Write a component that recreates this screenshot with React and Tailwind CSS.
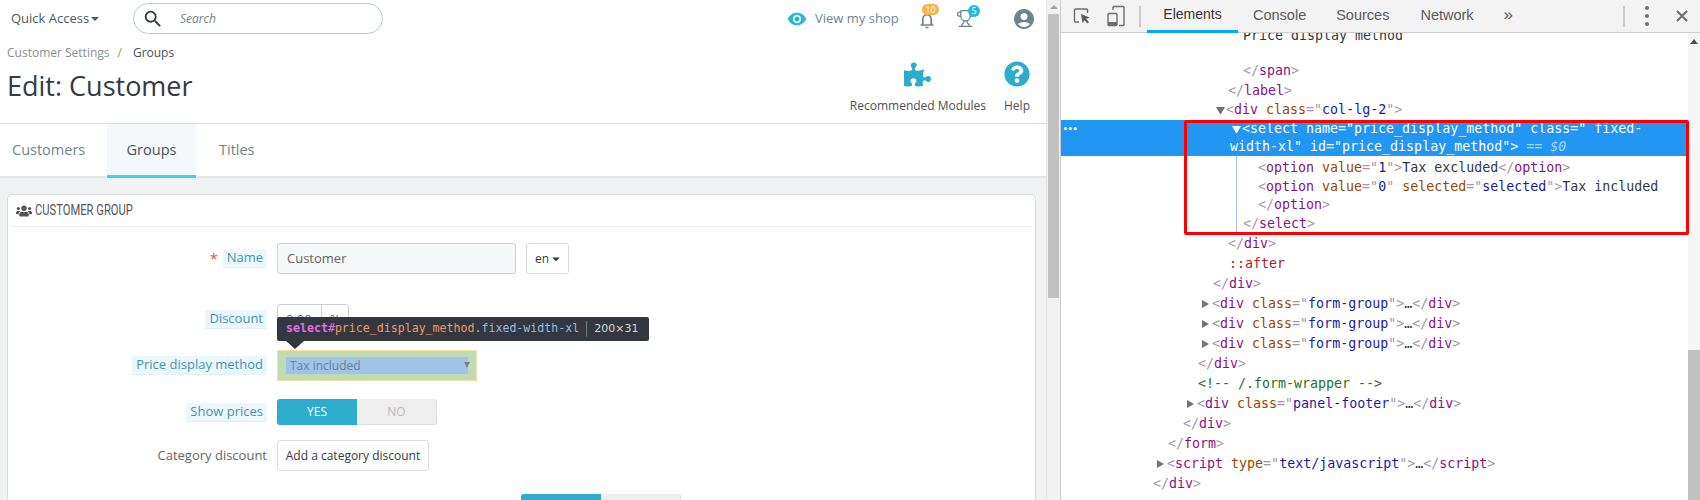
import { FaUsers, FaPuzzlePiece, FaQuestionCircle } from 'react-icons/fa';
import { MdVisibility, MdAccountCircle, MdNotificationsNone, MdSearch, MdArrowDropDown } from 'react-icons/md';
import { Trophy } from 'lucide-react';

const B = ({ children }) => <span className="text-[#a894a6]">{children}</span>;
const T = ({ children }) => <span className="text-[#881280]">{children}</span>;
const A = ({ children }) => <span className="text-[#994500]">{children}</span>;
const V = ({ children }) => <span className="text-[#1a1aa6]">{children}</span>;
const X = ({ children }) => <span className="text-[#303942]">{children}</span>;

const Open = ({ tag, attr, val }) => (
  <>
    <B>&lt;</B><T>{tag}</T>{' '}<A>{attr}</A><B>="</B><V>{val}</V><B>"&gt;</B>
  </>
);
const Close = ({ tag }) => (
  <>
    <B>&lt;/</B><T>{tag}</T><B>&gt;</B>
  </>
);

const Row = ({ left, arrow, children, h = 'h-5' }) => (
  <div className={`flex items-center whitespace-pre ${h}`}>
    <div className="shrink-0" style={{ width: left - 1061 }} />
    {arrow === 'down' ? <span className="-ml-[10px] mr-[1px] w-[9px] h-0 border-x-[4.5px] border-x-transparent border-t-[7px] border-t-[#727272]" /> : null}
    {arrow === 'right' ? <span className="-ml-[10px] mr-[3px] w-[7px] h-0 border-y-[4.5px] border-y-transparent border-l-[7px] border-l-[#727272]" /> : null}
    <span>{children}</span>
  </div>
);

const Collapsed = ({ left, tag, attr, val }) => (
  <Row left={left} arrow="right">
    <Open tag={tag} attr={attr} val={val} /><X>…</X><Close tag={tag} />
  </Row>
);

const Label = ({ children }) => (
  <span className="rounded-[2px] bg-[#edf7fb] px-1 h-[19px] flex items-center text-[#3f93b8] border-b border-[#e0f0f6]">{children}</span>
);

const FormRow = ({ label, className, children }) => (
  <div className={`flex items-center ${className}`}>
    <div className="w-[255px] shrink-0 flex justify-end items-center">{label}</div>
    <div className="ml-[10px] flex items-center">{children}</div>
  </div>
);

const Toggle = ({ yes, no }) => (
  <div className="flex w-[160px] h-[26px] text-[12px]">
    <div className="w-[80px] flex items-center justify-center rounded-l-[3px] bg-[#2eacce] text-white">{yes}</div>
    <div className="w-[80px] flex items-center justify-center rounded-r-[3px] bg-[#eeeeee] text-[#bbbbbb] border-r border-b border-[#dddddd]">{no}</div>
  </div>
);

const App = () => {
  return (
    <div className="flex w-[1700px] h-[500px] overflow-hidden bg-white font-['Open_Sans',sans-serif] text-[13px] text-[#363a41]">
      {/* page */}
      <div className="w-[1046px] shrink-0 flex flex-col">
        <div className="h-[37px] flex items-center shrink-0 whitespace-nowrap">
          <span className="ml-[11px] w-[76px] text-[13px] text-[#4d5a62]">Quick Access</span>
          <span className="ml-[4px] w-0 h-0 border-x-[4px] border-x-transparent border-t-[4px] border-t-[#4d5a62]" />
          <div className="ml-[34px] w-[250px] h-[31px] rounded-full border border-[#bbcdd2] flex items-center">
            <MdSearch className="ml-[8px] text-[#363a41]" size={22} />
            <span className="ml-[16px] italic text-[12px] text-[#6c868e]">Search</span>
          </div>
          <MdVisibility className="ml-[404px] text-[#25b9d7]" size={20} />
          <span className="ml-[8px] w-[83px] text-[13px] text-[#6c868e]">View my shop</span>
          <div className="relative ml-[19px] w-5 h-5 mt-[3px]">
            <MdNotificationsNone className="text-[#6c868e]" size={20} />
            <span className="absolute -top-[6px] left-[5px] w-[17px] h-[11px] rounded-full bg-[#f5b546] text-white text-[9px] leading-[11px] text-center">10</span>
          </div>
          <div className="relative ml-[19px] w-5 h-5">
            <Trophy className="text-[#6c868e]" size={19} strokeWidth={1.6} />
            <span className="absolute -top-[4px] left-[12px] w-[12px] h-[12px] rounded-full bg-[#25b9d7] text-white text-[9px] leading-[12px] text-center">5</span>
          </div>
          <MdAccountCircle className="ml-[36px] text-[#6c868e]" size={24} />
        </div>

        <div className="relative h-[87px] shrink-0 border-b border-[#dfdfdf]">
          <div className="flex items-center h-[30px] pl-[7px] text-[12px] pt-[1px]">
            <span className="text-[#8a8f94]">Customer Settings</span>
            <span className="ml-[8px] text-[#72a83f]">/</span>
            <span className="ml-[11px] text-[#4a4f55]">Groups</span>
          </div>
          <div className="pl-[7px] text-[27px] leading-[32px] mt-[3px] text-[#363a41]">Edit: Customer</div>
          <div className="absolute right-[16px] top-[24px] flex gap-[18px] text-[12px] text-[#4a4f55]">
            <div className="flex flex-col items-center">
              <FaPuzzlePiece className="text-[#2eacce]" size={27} />
              <span className="mt-[9px]">Recommended Modules</span>
            </div>
            <div className="flex flex-col items-center">
              <FaQuestionCircle className="text-[#2eacce]" size={26} />
              <span className="mt-[10px]">Help</span>
            </div>
          </div>
        </div>

        <div className="h-[54px] shrink-0 flex border-b-[2px] border-[#e4e6e8] text-[14.5px] text-[#6c868e]">
          <div className="w-[107px] pl-[12px] flex items-center">Customers</div>
          <div className="w-[89px] flex items-center justify-center bg-[#f4f8fa] text-[#4a5359] border-b-[3px] border-[#3ed2f2] -mb-[2px] pt-[1px]">Groups</div>
          <div className="pl-[23px] flex items-center">Titles</div>
        </div>

        <div className="flex-1 bg-[#eff1f2] pt-[16px] pl-[7px] pr-[10px] min-h-0">
          <div className="h-[400px] rounded-t-[5px] border border-[#d9dcde] bg-white px-[4px]">
            <div className="h-[32px] flex items-center border-b border-[#eeeeee] pl-[4px] text-[#555555]">
              <FaUsers size={16} />
              <span className="ml-[3px] inline-block origin-left scale-x-[0.8] font-['Roboto',sans-serif] text-[14px]">CUSTOMER GROUP</span>
            </div>

            <FormRow
              className="mt-[16px]"
              label={<><span className="text-[#f54c3e] mr-[5px] text-[14px]">*</span><Label>Name</Label></>}
            >
              <div className="w-[239px] h-[31px] rounded-[3px] border border-[#c5d3d9] bg-[#f5f8f9] pl-[9px] flex items-center text-[#666666]">Customer</div>
              <div className="ml-[10px] w-[43px] h-[31px] rounded-[3px] border border-[#dddddd] flex items-center pl-[8px] text-[12px]">
                en<MdArrowDropDown className="-ml-[2px]" size={18} />
              </div>
            </FormRow>

            <FormRow className="mt-[30px]" label={<Label>Discount</Label>}>
              <div className="w-[72px] h-[31px] rounded-[3px] border border-[#c5d3d9] flex text-[#666666]">
                <span className="w-[43px] pl-[8px] flex items-center">0.00</span>
                <span className="flex-1 border-l border-[#c5d3d9] flex items-center justify-center">%</span>
              </div>
            </FormRow>

            <FormRow className="mt-[15px] relative" label={<Label>Price display method</Label>}>
              <div className="relative w-[200px] h-[31px] border border-[#f8dfa5] bg-[#c0dbb4] px-[8px] py-[6px]">
                <div className="h-[17px] bg-[#9fc4e7] flex items-center pl-[4px] text-[12px] text-[#6c8298]">Tax included</div>
                <span className="absolute right-[6px] top-[11px] w-0 h-0 border-x-[3.5px] border-x-transparent border-t-[6px] border-t-[#77858b]" />
                <div className="absolute -left-[1px] top-[-34px] w-[372px] h-[24px] rounded-[2px] bg-[#333740] flex items-center pl-[9px] font-['DejaVu_Sans_Mono',monospace] text-[11.6px] whitespace-pre">
                  <span className="text-[#e36eec] font-bold">select</span>
                  <span className="text-[#e36eec]">#</span>
                  <span className="text-[#f29766]">price_display_method</span>
                  <span className="text-[#9bbbdc]">.fixed-width-xl</span>
                  <span className="ml-[7px] border-l border-[#777777] pl-[7px] text-[#d9d9d9] font-['DejaVu_Sans',sans-serif] text-[11px]">200×31</span>
                  <span className="absolute left-[9px] top-full w-0 h-0 border-x-[9px] border-x-transparent border-t-[8px] border-t-[#333740]" />
                </div>
              </div>
            </FormRow>

            <FormRow className="mt-[18px]" label={<Label>Show prices</Label>}>
              <Toggle yes="YES" no="NO" />
            </FormRow>

            <FormRow className="mt-[15px]" label={<span className="text-[#666666]">Category discount</span>}>
              <div className="w-[152px] h-[31px] rounded-[3px] border border-[#dddddd] flex items-center justify-center text-[12px] text-[#363a41] whitespace-nowrap">Add a category discount</div>
            </FormRow>

            <div className="mt-[23px] pl-[509px]">
              <Toggle />
            </div>
          </div>
        </div>
      </div>

      {/* page scrollbar */}
      <div className="w-[14px] shrink-0 bg-[#f1f1f1] flex flex-col items-center border-l border-[#e6e6e6]">
        <span className="mt-[5px] w-0 h-0 border-x-[4px] border-x-transparent border-b-[4px] border-b-[#a3a3a3]" />
        <div className="mt-[5px] w-[11px] h-[284px] bg-[#c1c1c1]" />
      </div>
      <div className="w-[1px] shrink-0 bg-[#cccccc]" />

      {/* devtools */}
      <div className="relative flex-1 flex flex-col min-w-0">
        <div className="h-[33px] shrink-0 flex items-center bg-[#f3f3f3] border-b border-[#cccccc] font-['Liberation_Sans',sans-serif] text-[14.5px] text-[#5a5a5a]">
          <svg className="ml-[12px]" width="18" height="18" viewBox="0 0 18 18" fill="none">
            <path d="M6 15H2.5a1 1 0 0 1-1-1V3a1 1 0 0 1 1-1h11a1 1 0 0 1 1 1v3" stroke="#6e6e6e" strokeWidth="1.4" />
            <path d="M8 7l8.5 3.5-3.3 1.4 2.8 3.2-1.6 1.3-2.7-3.2L9.5 16z" fill="#5a5a5a" />
          </svg>
          <svg className="ml-[15px]" width="20" height="22" viewBox="0 0 20 22" fill="none">
            <path d="M7 5V2.5a1 1 0 0 1 1-1h9a1 1 0 0 1 1 1v17a1 1 0 0 1-1 1h-4" stroke="#6e6e6e" strokeWidth="1.4" />
            <rect x="2" y="8.5" width="9" height="12" rx="1" stroke="#6e6e6e" strokeWidth="1.4" />
            <rect x="2" y="17" width="9" height="3" fill="#6e6e6e" />
          </svg>
          <div className="ml-[13px] w-[2px] h-[21px] bg-[#cccccc]" />
          <div className="ml-[6px] w-[91px] h-[33px] flex items-center justify-center border-b-[3px] border-[#03a9f4] text-[14px] text-[#333333]">Elements</div>
          <span className="ml-[15px]">Console</span>
          <span className="ml-[30px]">Sources</span>
          <span className="ml-[31px]">Network</span>
          <span className="ml-[30px] text-[17px] leading-[16px] -mt-[3px]">»</span>
          <div className="ml-[110px] w-[2px] h-[21px] bg-[#cccccc]" />
          <div className="ml-[20px] flex flex-col gap-[4px]">
            <span className="w-[4px] h-[4px] rounded-full bg-[#6e6e6e]" />
            <span className="w-[4px] h-[4px] rounded-full bg-[#6e6e6e]" />
            <span className="w-[4px] h-[4px] rounded-full bg-[#6e6e6e]" />
          </div>
          <svg className="ml-[27px]" width="12" height="12" viewBox="0 0 12 12">
            <path d="M1 1l10 10M11 1L1 11" stroke="#6e6e6e" strokeWidth="2" />
          </svg>
        </div>

        <div className="flex-1 flex min-h-0">
          <div className="flex-1 min-w-0 overflow-hidden font-['DejaVu_Sans_Mono',monospace] text-[13.3px] text-[#303942]">
            <div className="-mt-[7px]">
              <Row left={1243}><X>Price display method</X></Row>
              <div className="h-[15px]" />
              <Row left={1243}><Close tag="span" /></Row>
              <Row left={1228} h="h-[19px]"><Close tag="label" /></Row>
              <Row left={1226} arrow="down"><Open tag="div" attr="class" val="col-lg-2" /></Row>

              <div className="relative h-[36px] bg-[#2196f3] text-white whitespace-pre">
                <span className="absolute left-[2px] top-[5px] text-[8px] leading-[10px] font-bold">•••</span>
                <div className="h-[18px] flex items-center pl-[181px]">
                  <span className="-ml-[10px] mr-[1px] w-[9px] h-0 border-x-[4.5px] border-x-transparent border-t-[7px] border-t-white" />
                  {'<select name="price_display_method" class=" fixed-'}
                </div>
                <div className="h-[18px] flex items-center pl-[169px]">
                  {'width-xl" id="price_display_method">'}
                  <span className="text-[#a6d5f9]">{' == '}<i>$0</i></span>
                </div>
              </div>

              <div className="relative mt-[2px]">
                <Row left={1258}><Open tag="option" attr="value" val="1" /><X>Tax excluded</X><Close tag="option" /></Row>
                <Row left={1258} h="h-[18px]">
                  <B>&lt;</B><T>option</T>{' '}<A>value</A><B>="</B><V>0</V><B>"</B>{' '}<A>selected</A><B>="</B><V>selected</V><B>"&gt;</B><X>Tax included</X>
                </Row>
                <Row left={1258} h="h-[18px]"><Close tag="option" /></Row>
                <Row left={1243}><Close tag="select" /></Row>
                <span className="absolute left-[175px] -top-[2px] bottom-[2px] w-[1px] bg-[#a9c4e8]" />
              </div>

              <Row left={1228}><Close tag="div" /></Row>
              <Row left={1229}><span className="text-[#aa2222]">::after</span></Row>
              <Row left={1213}><Close tag="div" /></Row>
              <Collapsed left={1212} tag="div" attr="class" val="form-group" />
              <Collapsed left={1212} tag="div" attr="class" val="form-group" />
              <Collapsed left={1212} tag="div" attr="class" val="form-group" />
              <Row left={1198}><Close tag="div" /></Row>
              <Row left={1198}><span className="text-[#236e25]">{'<!-- /.form-wrapper -->'}</span></Row>
              <Collapsed left={1197} tag="div" attr="class" val="panel-footer" />
              <Row left={1183}><Close tag="div" /></Row>
              <Row left={1168}><Close tag="form" /></Row>
              <Collapsed left={1167} tag="script" attr="type" val="text/javascript" />
              <Row left={1153}><Close tag="div" /></Row>
            </div>
          </div>
          <div className="w-[12px] shrink-0 bg-[#f5f5f5] flex flex-col items-center">
            <span className="mt-[6px] w-0 h-0 border-x-[4px] border-x-transparent border-b-[5px] border-b-[#505050]" />
            <div className="mt-[306px] w-full flex-1 bg-[#c1c1c1]" />
          </div>
        </div>

        {/* red annotation box drawn over the panel */}
        <div className="absolute left-[123px] top-[120px] w-[505px] h-[115px] border-[3px] border-[#ff0000] rounded-[2px] pointer-events-none" />
      </div>
    </div>
  );
};

export default App;
